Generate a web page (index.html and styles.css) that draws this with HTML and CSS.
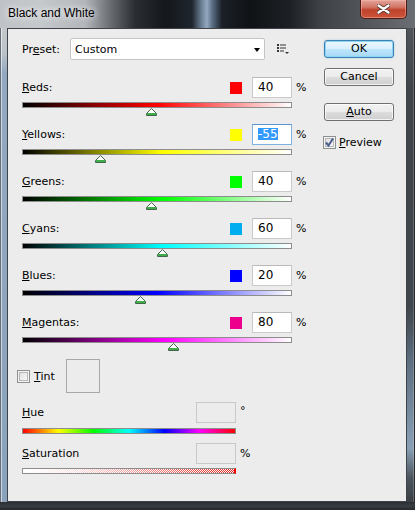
FILE: index.html
```html
<!DOCTYPE html>
<html>
<head>
<meta charset="utf-8">
<link rel="stylesheet" href="styles.css">
</head>
<body>
<div class="window">
  <div class="titlebar">
    <span class="title">Black and White</span>
    <div class="close">
      <svg width="13" height="10" viewBox="0 0 13 10">
        <path d="M1.5 1.5 L11.5 8.5 M11.5 1.5 L1.5 8.5" stroke="#5a3a36" stroke-width="4" stroke-linecap="round"/>
        <path d="M1.5 1.5 L11.5 8.5 M11.5 1.5 L1.5 8.5" stroke="#fff" stroke-width="2.2" stroke-linecap="round"/>
      </svg>
    </div>
  </div>
  <div class="frame">
    <div class="edge-left"></div>
    <div class="client">
      <div class="main">
        <div class="preset">
          <span class="preset-label">Pr<u>e</u>set:</span>
          <div class="combo"><span>Custom</span><span class="arrow"></span></div>
          <svg class="listicon" width="12" height="11" viewBox="0 0 12 11">
            <rect x="0" y="0" width="2" height="2" fill="#333"/>
            <rect x="3" y="0.5" width="6" height="1" fill="#333"/>
            <rect x="0" y="3" width="2" height="2" fill="#333"/>
            <rect x="3" y="3.5" width="6" height="1" fill="#333"/>
            <rect x="0" y="6" width="2" height="2" fill="#333"/>
            <rect x="3" y="6.5" width="4" height="1" fill="#333"/>
            <path d="M8 8 L12 8 L10 10 Z" fill="#333"/>
          </svg>
        </div>

        <div class="srow">
          <div class="shead">
            <span class="slabel"><u>R</u>eds:</span>
            <span class="swatch sw-red"></span>
            <div class="num">40</div>
            <span class="unit">%</span>
          </div>
          <div class="track g-red">
            <svg class="thumb" style="left:123px" width="11" height="8" viewBox="0 0 11 8"><polygon points="5.5,0.5 10.5,5.5 10.5,7.5 0.5,7.5 0.5,5.5" fill="#fff" stroke="#42664a"/><rect x="1" y="5" width="9" height="2" fill="#3fae49"/></svg>
          </div>
        </div>

        <div class="srow">
          <div class="shead">
            <span class="slabel"><u>Y</u>ellows:</span>
            <span class="swatch sw-yellow"></span>
            <div class="num focus"><span class="sel">-55</span></div>
            <span class="unit">%</span>
          </div>
          <div class="track g-yellow">
            <svg class="thumb" style="left:72px" width="11" height="8" viewBox="0 0 11 8"><polygon points="5.5,0.5 10.5,5.5 10.5,7.5 0.5,7.5 0.5,5.5" fill="#fff" stroke="#42664a"/><rect x="1" y="5" width="9" height="2" fill="#3fae49"/></svg>
          </div>
        </div>

        <div class="srow">
          <div class="shead">
            <span class="slabel"><u>G</u>reens:</span>
            <span class="swatch sw-green"></span>
            <div class="num">40</div>
            <span class="unit">%</span>
          </div>
          <div class="track g-green">
            <svg class="thumb" style="left:123px" width="11" height="8" viewBox="0 0 11 8"><polygon points="5.5,0.5 10.5,5.5 10.5,7.5 0.5,7.5 0.5,5.5" fill="#fff" stroke="#42664a"/><rect x="1" y="5" width="9" height="2" fill="#3fae49"/></svg>
          </div>
        </div>

        <div class="srow">
          <div class="shead">
            <span class="slabel"><u>C</u>yans:</span>
            <span class="swatch sw-cyan"></span>
            <div class="num">60</div>
            <span class="unit">%</span>
          </div>
          <div class="track g-cyan">
            <svg class="thumb" style="left:134px" width="11" height="8" viewBox="0 0 11 8"><polygon points="5.5,0.5 10.5,5.5 10.5,7.5 0.5,7.5 0.5,5.5" fill="#fff" stroke="#42664a"/><rect x="1" y="5" width="9" height="2" fill="#3fae49"/></svg>
          </div>
        </div>

        <div class="srow">
          <div class="shead">
            <span class="slabel"><u>B</u>lues:</span>
            <span class="swatch sw-blue"></span>
            <div class="num">20</div>
            <span class="unit">%</span>
          </div>
          <div class="track g-blue">
            <svg class="thumb" style="left:112px" width="11" height="8" viewBox="0 0 11 8"><polygon points="5.5,0.5 10.5,5.5 10.5,7.5 0.5,7.5 0.5,5.5" fill="#fff" stroke="#42664a"/><rect x="1" y="5" width="9" height="2" fill="#3fae49"/></svg>
          </div>
        </div>

        <div class="srow">
          <div class="shead">
            <span class="slabel"><u>M</u>agentas:</span>
            <span class="swatch sw-magenta"></span>
            <div class="num">80</div>
            <span class="unit">%</span>
          </div>
          <div class="track g-magenta">
            <svg class="thumb" style="left:145px" width="11" height="8" viewBox="0 0 11 8"><polygon points="5.5,0.5 10.5,5.5 10.5,7.5 0.5,7.5 0.5,5.5" fill="#fff" stroke="#42664a"/><rect x="1" y="5" width="9" height="2" fill="#3fae49"/></svg>
          </div>
        </div>

        <div class="tint">
          <span class="check"></span>
          <span class="tint-label"><u>T</u>int</span>
          <span class="tintbox"></span>
        </div>

        <div class="hrow hue">
          <div class="hhead">
            <span class="hlabel"><u>H</u>ue</span>
            <div class="num disabled"></div>
            <span class="unit">°</span>
          </div>
          <div class="track hbar g-hue"></div>
        </div>

        <div class="hrow sat">
          <div class="hhead">
            <span class="hlabel"><u>S</u>aturation</span>
            <div class="num disabled"></div>
            <span class="unit">%</span>
          </div>
          <div class="track hbar sbar g-sat"></div>
        </div>
      </div>

      <div class="side">
        <div class="btn default">OK</div>
        <div class="btn cancel">Cancel</div>
        <div class="btn auto"><u>A</u>uto</div>
        <div class="preview">
          <span class="check checked">
            <svg width="11" height="11" viewBox="0 0 11 11"><path d="M2 5.5 L4.5 8.5 L9 1.5" fill="none" stroke="#4a5f8d" stroke-width="2"/></svg>
          </span>
          <span class="preview-label"><u>P</u>review</span>
        </div>
      </div>
    </div>
    <div class="edge-right"></div>
  </div>
  <div class="bottom"></div>
</div>
</body>
</html>
```

FILE: styles.css
```css
* { box-sizing: border-box; }

body {
  margin: 0;
  background: #5a5e63;
  font-family: "DejaVu Sans", Verdana, sans-serif;
  font-size: 11px;
  color: #000;
}

u { text-decoration: underline; text-underline-offset: 1px; }

.window {
  width: 415px;
  height: 510px;
  display: flex;
  flex-direction: column;
  overflow: hidden;
}

/* ---------- title bar ---------- */
.titlebar {
  height: 28px;
  flex: none;
  display: flex;
  align-items: flex-start;
  background: linear-gradient(to right,
    #bfc3c7 0px, #c6c9cc 40px, #b3b6ba 85px, #6a6e73 110px, #2a2e33 135px,
    #14171b 165px, #1f252d 192px, #6f8399 202px, #93a8bf 207px, #5d7086 212px,
    #1b2027 222px, #101316 250px, #1d2024 290px, #3e4246 320px, #55595d 370px, #6b6e72 415px);
}

.title {
  font-family: "Liberation Sans", Arial, sans-serif;
  font-size: 12px;
  line-height: 14px;
  padding: 6px 0 0 8px;
  color: #000;
  text-shadow: 0 0 6px rgba(255,255,255,0.9), 0 0 10px rgba(255,255,255,0.7);
}

.close {
  margin-left: auto;
  margin-right: 8px;
  width: 47px;
  height: 19px;
  border: 1px solid #4e1c15;
  border-top: none;
  border-radius: 0 0 5px 5px;
  background: linear-gradient(to bottom, #e2a399 0%, #d27565 40%, #c0422c 55%, #c9553b 100%);
  box-shadow: inset 0 0 0 1px rgba(255, 190, 175, 0.45);
  display: flex;
  align-items: center;
  justify-content: center;
}

/* ---------- frame ---------- */
.frame {
  height: 474px;
  flex: none;
  display: flex;
}

.edge-left {
  width: 7px;
  border-left: 1px solid #66707a;
  background: linear-gradient(to bottom, #c4c8cc 0px, #bcc2c8 25px, #93a9bf 45px, #8aa2bb 100%);
  box-shadow: inset 1px 0 0 rgba(255,255,255,0.55);
}

.edge-right {
  flex: 1;
  border-right: 1px solid #25292d;
  background: linear-gradient(to bottom, #50555b 0px, #3f444a 60px, #40464d 280px, #5b6c7d 330px, #8aa0b5 420px, #4b545d 450px, #3a3f44 474px);
  box-shadow: inset -1px 0 0 rgba(255,255,255,0.2);
}

.bottom {
  height: 8px;
  flex: none;
  background: linear-gradient(to bottom, #2b2f34 0px, #383d43 4px, #24272b 8px);
}

.client {
  width: 400px;
  height: 474px;
  border: 1px solid #3e4349;
  background: #ececec;
  display: flex;
  padding: 9px 0 0 14px;
}

.main {
  width: 286px;
}

/* ---------- preset row ---------- */
.preset {
  display: flex;
  align-items: center;
  height: 22px;
  margin-bottom: 17px;
}

.preset-label { width: 48px; }

.combo {
  width: 195px;
  height: 22px;
  border: 1px solid #c4c4c4;
  border-radius: 2px;
  background: #fff;
  display: flex;
  align-items: center;
  padding: 0 4px 0 4px;
}

.arrow {
  margin-left: auto;
  width: 0;
  height: 0;
  border-left: 3.5px solid transparent;
  border-right: 3.5px solid transparent;
  border-top: 4px solid #000;
  margin-top: 1px;
}

.listicon {
  margin-left: 12px;
  margin-top: 1px;
}

/* ---------- slider rows ---------- */
.srow {
  margin-bottom: 16px;
}

.shead {
  display: flex;
  align-items: center;
  height: 21px;
}

.slabel { flex: 1; }

.swatch {
  width: 12px;
  height: 12px;
  margin-right: 10px;
}

.sw-red { background: #ff0000; }
.sw-yellow { background: #ffff00; }
.sw-green { background: #00ff00; }
.sw-cyan { background: #00aeef; }
.sw-blue { background: #0000ff; }
.sw-magenta { background: #ec008c; }

.num {
  width: 40px;
  height: 21px;
  border: 1px solid #cacaca;
  border-top-color: #b9b9b9;
  background: #fff;
  font-size: 12px;
  line-height: 19px;
  padding-left: 5px;
}

.num.focus {
  border-color: #7fb1e3;
  border-top-color: #5b94cf;
}

.sel {
  display: inline-block;
  background: #3399ff;
  color: #fff;
  line-height: 12px;
  height: 12px;
  vertical-align: middle;
  margin-top: -2px;
}

.num.disabled {
  background: #ececec;
  border-color: #c9c9c9;
}

.unit {
  width: 12px;
  margin-left: 4px;
}

.track {
  position: relative;
  width: 270px;
  height: 6px;
  margin-top: 4px;
  border: 1px solid #8d8d8d;
}

.thumb {
  position: absolute;
  top: 5px;
  display: block;
}

.g-red { background: linear-gradient(to right, #000 0%, #ff0000 50%, #fff 100%); }
.g-yellow { background: linear-gradient(to right, #000 0%, #ffff00 52%, #fff 100%); }
.g-green { background: linear-gradient(to right, #000 0%, #00ff00 52%, #fff 100%); }
.g-cyan { background: linear-gradient(to right, #000 0%, #00ffff 52%, #fff 100%); }
.g-blue { background: linear-gradient(to right, #000 0%, #0000ff 50%, #fff 100%); }
.g-magenta { background: linear-gradient(to right, #000 0%, #ff00ff 53%, #fff 100%); }

/* ---------- tint ---------- */
.tint {
  display: flex;
  align-items: center;
  height: 34px;
  margin: 1px 0 0 -5px;
}

.check {
  width: 13px;
  height: 13px;
  border: 1px solid #8e8f8f;
  background: linear-gradient(135deg, #d8d8d8 0%, #f0f0f0 60%, #fbfbfb 100%);
  box-shadow: inset 0 0 0 1px #f4f4f4, inset 0 0 0 2px #b4b8bd;
  display: flex;
  align-items: center;
  justify-content: center;
}

.tint-label {
  width: 32px;
  margin-left: 4px;
}

.tintbox {
  width: 34px;
  height: 34px;
  border: 1px solid #a8a8a8;
}

/* ---------- hue / saturation ---------- */
.hrow.hue { margin-top: 9px; }
.hrow.sat { margin-top: 9px; }

.hhead {
  display: flex;
  align-items: center;
  height: 21px;
  width: 230px;
}

.hlabel { flex: 1; }

.hue .unit { align-self: flex-start; margin-top: 2px; }

.hbar {
  width: 214px;
  margin-top: 5px;
}

.sbar { margin-top: 4px; }

.g-hue {
  background: linear-gradient(to right, #ff0000 0%, #ffff00 16.7%, #00ff00 33.3%, #00ffff 50%, #0000ff 66.7%, #ff00ff 83.3%, #ff0000 100%);
}

.g-sat {
  border-right: 2px solid #ff0000;
  background:
    linear-gradient(to right, #fff 0%, rgba(255,255,255,0.85) 25%, rgba(255,255,255,0) 100%),
    repeating-conic-gradient(#e0201a 0 25%, #ffffff 0 50%) 0 0 / 2px 2px;
}

/* ---------- side buttons ---------- */
.side {
  margin-left: 15px;
  width: 72px;
  display: flex;
  flex-direction: column;
}

.btn {
  margin-left: 1px;
  width: 70px;
  height: 18px;
  border: 1px solid #707070;
  border-radius: 3px;
  background: linear-gradient(to bottom, #f2f2f2 0%, #ebebeb 50%, #dddddd 50%, #cfcfcf 100%);
  box-shadow: inset 0 0 0 1px rgba(255,255,255,0.75);
  text-align: center;
  line-height: 16px;
}

.btn.default {
  margin-top: 2px;
  border-color: #3c7fb1;
  background: linear-gradient(to bottom, #eaf6fd 0%, #d9f0fc 50%, #bee6fd 50%, #a7d9f5 100%);
  box-shadow: inset 0 0 0 1px #8ed6f7, 0 0 2px rgba(100,180,230,0.5);
}

.btn.cancel { margin-top: 10px; }
.btn.auto { margin-top: 17px; }

.preview {
  margin-top: 15px;
  display: flex;
  align-items: center;
  height: 13px;
}

.preview-label { margin-left: 3px; }
```
